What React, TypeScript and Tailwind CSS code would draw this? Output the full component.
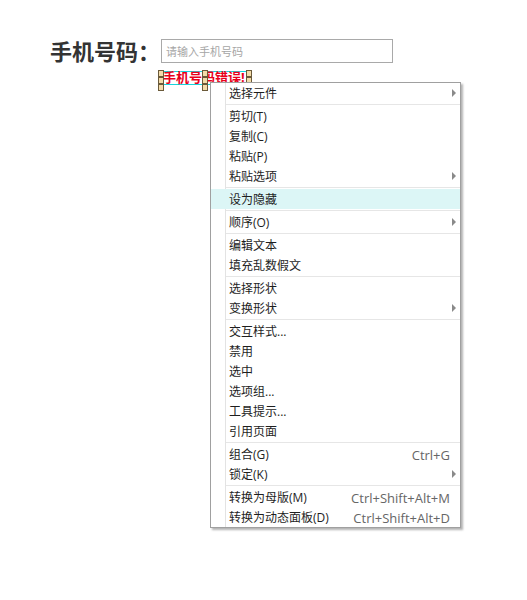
import React from 'react';

type Item = { label: string; shortcut?: string; sub?: boolean; active?: boolean };

const groups: Item[][] = [
    [{ label: '选择元件', sub: true }],
    [
        { label: '剪切(T)' },
        { label: '复制(C)' },
        { label: '粘贴(P)' },
        { label: '粘贴选项', sub: true },
    ],
    [{ label: '设为隐藏', active: true }],
    [{ label: '顺序(O)', sub: true }],
    [{ label: '编辑文本' }, { label: '填充乱数假文' }],
    [{ label: '选择形状' }, { label: '变换形状', sub: true }],
    [
        { label: '交互样式...' },
        { label: '禁用' },
        { label: '选中' },
        { label: '选项组...' },
        { label: '工具提示...' },
        { label: '引用页面' },
    ],
    [{ label: '组合(G)', shortcut: 'Ctrl+G' }, { label: '锁定(K)', sub: true }],
    [
        { label: '转换为母版(M)', shortcut: 'Ctrl+Shift+Alt+M' },
        { label: '转换为动态面板(D)', shortcut: 'Ctrl+Shift+Alt+D' },
    ],
];

function Handle() {
    return <div className="w-[6px] h-[7px] bg-[#f3dcaa] border border-[#6b5a3a]" />;
}

function MenuRow({ item }: { item: Item }) {
    return (
        <div className={`flex h-5 items-center ${item.active ? 'bg-[#dcf6f6]' : ''}`}>
            <div className={`w-[15px] h-full ${item.active ? '' : 'border-r border-[#e3e3e3]'}`} />
            <span className="relative top-[1px] pl-[3px] flex-1 text-[12px] leading-5 text-[#1e1e1e]">{item.label}</span>
            {item.shortcut && (
                <span className="relative top-[1px] pr-[10px] text-[13px] leading-5 text-[#666]">{item.shortcut}</span>
            )}
            {item.sub && (
                <span className="mr-[4px] w-0 h-0 border-y-[4px] border-y-transparent border-l-[4px] border-l-[#8a8a8a]" />
            )}
        </div>
    );
}

function Separator() {
    return (
        <div className="flex h-[3px]">
            <div className="w-[15px] h-full border-r border-[#e3e3e3]" />
            <div className="flex-1 flex items-center">
                <div className="w-full h-px bg-[#e6e6e6]" />
            </div>
        </div>
    );
}

export default function App() {
    return (
        <div
            className="relative w-[527px] h-[600px] bg-white"
            style={{ fontFamily: '"Open Sans", "Noto Sans CJK SC", sans-serif' }}
        >
            <div className="flex items-center pl-[50px] pt-[39px]">
                <div className="w-[111px] text-[22px] font-bold leading-[24px] text-[#333]">手机号码：</div>
                <div className="w-[232px] h-[24px] border border-[#a9a9a9] flex items-center pl-[4px]">
                    <span className="text-[11px] text-[#a6a6a6] leading-none">请输入手机号码</span>
                </div>
            </div>

            {/* selected text widget */}
            <div className="relative ml-[160px] mt-[8px] w-[89px] h-[14px] border border-[#19d3dc]">
                <span className="absolute left-[2px] top-[-2px] text-[13px] font-bold leading-[14px] text-[#e8001a] whitespace-nowrap">
                    手机号码错误!
                </span>
                <div className="absolute left-[-3px] top-[-2px] flex flex-col">
                    <Handle />
                    <Handle />
                    <Handle />
                </div>
                <div className="absolute left-[41px] top-[-2px] flex flex-col">
                    <Handle />
                    <Handle />
                    <Handle />
                </div>
                <div className="absolute left-[85px] top-[-2px] flex flex-col">
                    <Handle />
                    <Handle />
                </div>
            </div>

            {/* context menu */}
            <div className="absolute left-[210px] top-[82px] w-[251px] bg-white border border-[#a0a0a0] shadow-[2px_2px_2px_rgba(0,0,0,0.3)]">
                {groups.map((g, gi) => (
                    <div key={gi}>
                        {gi > 0 && <Separator />}
                        {g.map((item) => (
                            <MenuRow key={item.label} item={item} />
                        ))}
                    </div>
                ))}
            </div>
        </div>
    );
}
